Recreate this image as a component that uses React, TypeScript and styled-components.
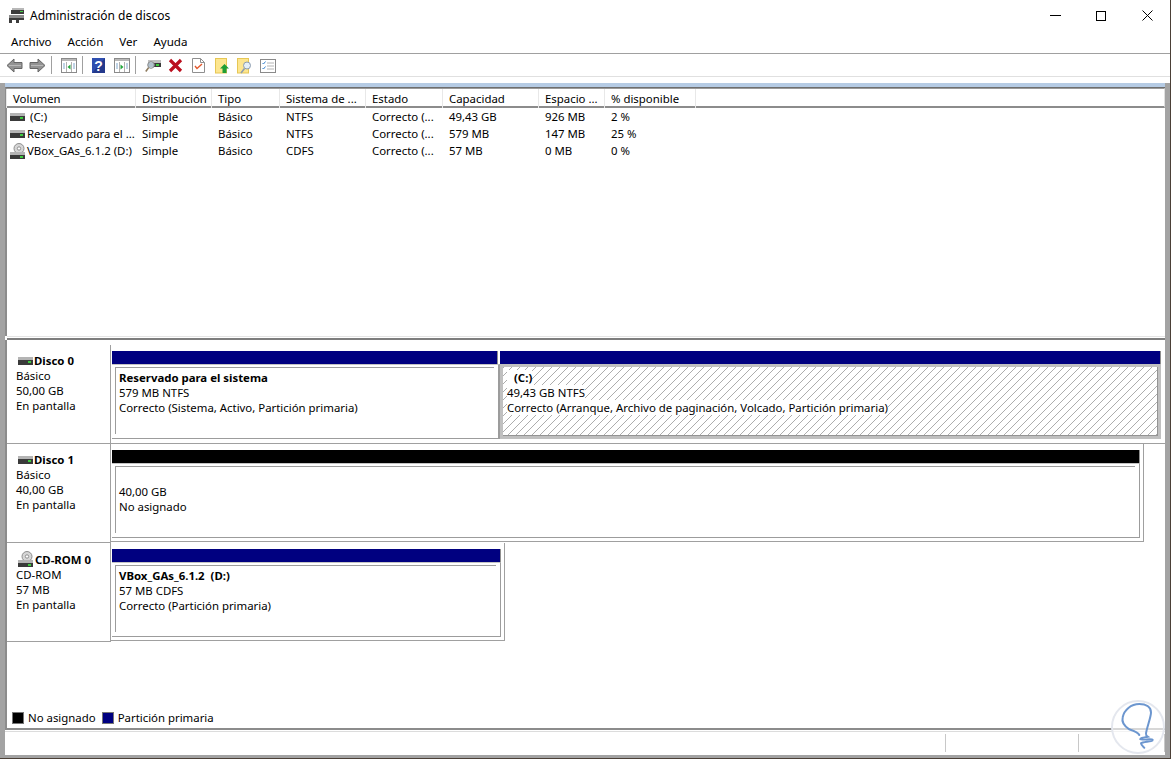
import React from 'react';
import styled, { createGlobalStyle, css } from 'styled-components';

const GlobalStyle = createGlobalStyle`
  html, body { margin: 0; padding: 0; height: 100%; overflow: hidden; background: #4b4037; }
  body { font-family: "Noto Sans", "Open Sans", sans-serif; font-size: 11.4px; color: #000; }
`;

const LINE = '#a0a0a0';
const FRAME = '#a3a3a3';
const NAVY = '#000080';

const Window = styled.div`
  position: relative;
  width: 1170px;
  height: 758px;
  background: #fff;
  display: flex;
  flex-direction: column;
`;

const TitleBar = styled.div`
  height: 33px;
  display: flex;
  align-items: flex-start;
  padding-left: 9px;
`;

const TitleText = styled.span`
  font-size: 12px;
  line-height: 16px;
  margin: 8px 0 0 5px;
  flex: 1;
`;

const WinButton = styled.div`
  width: 46px;
  height: 31px;
  display: flex;
  align-items: center;
  justify-content: center;
`;

const MenuBar = styled.div`
  height: 20px;
  display: flex;
  gap: 16px;
  padding-left: 11px;
  border-bottom: 1px solid ${LINE};
  font-size: 11.6px;
  line-height: 18px;
`;

const Toolbar = styled.div`
  height: 22px;
  box-sizing: content-box;
  display: flex;
  align-items: center;
  padding-left: 3px;
  border-bottom: 1px solid #e0e0e0;
  margin-bottom: 6px;
`;

const ToolButton = styled.div`
  width: 23px;
  height: 22px;
  padding-top: 1px;
  box-sizing: border-box;
  display: flex;
  align-items: center;
  justify-content: center;
`;

const ToolSep = styled.div<{ $right: number }>`
  width: 1px;
  height: 18px;
  background: #a0a0a0;
  margin: 0 ${(p) => p.$right}px 0 2px;
`;

const Frame = styled.div`
  flex: 1;
  min-height: 0;
  display: flex;
  flex-direction: column;
  border-left: 5px solid ${FRAME};
  border-right: 5px solid ${FRAME};
  border-bottom: 3px solid ${FRAME};
`;

const Band = styled.div`
  height: 4px;
  flex: none;
  background: #b5cbe4;
`;

const ListPane = styled.div`
  height: 249px;
  flex: none;
  border-left: 2px solid #8c8c8c;
  border-top: 1px solid #6e6e6e;
  box-sizing: border-box;
`;

const columns = '129px 76px 68px 86px 77px 96px 66px 91px 1fr';

const HeaderRow = styled.div`
  display: grid;
  grid-template-columns: ${columns};
  height: 20px;
  box-sizing: border-box;
  border-top: 1px solid #9a9a9a;
  border-bottom: 2px solid #8c8c8c;
  border-right: 1px solid #e0e0e0;
`;

const HeaderCell = styled.div`
  padding-left: 6px;
  line-height: 19px;
  white-space: nowrap;
  border-right: 1px solid #9c9c9c;
  border-left: 1px solid #e8e8e8;
  margin-left: -1px;
  &:last-child { border-right: none; }
`;

const Row = styled.div`
  display: grid;
  grid-template-columns: ${columns};
  height: 17px;
  line-height: 17px;
  white-space: nowrap;
`;

const Cell = styled.div`
  padding-left: 6px;
`;

const NameCell = styled.div<{ $indent?: number; $cd?: boolean }>`
  display: flex;
  align-items: center;
  gap: ${(p) => (p.$cd ? 1 : 2)}px;
  padding-left: 3px;
  span { margin-left: ${(p) => p.$indent ?? 0}px; }
`;

const Splitter = styled.div`
  height: 4px;
  flex: none;
  box-sizing: border-box;
  border-top: 1px solid #e4e4e4;
  border-bottom: 2px solid #7e7e7e;
  margin-left: 2px;
`;

const GraphPane = styled.div`
  flex: 1;
  min-height: 0;
  display: flex;
  flex-direction: column;
  border-left: 2px solid #8c8c8c;
  border-bottom: 2px solid #8c8c8c;
`;

const DiskRow = styled.div<{ $first?: boolean }>`
  display: flex;
  align-items: stretch;
  height: 99px;
  flex: none;
  ${(p) => p.$first && css`
    margin-top: 5px;
    border-bottom: 1px solid ${LINE};
    box-sizing: border-box;
    & > div:first-child { border-bottom: none; }
  `}
`;

const DiskLabel = styled.div`
  width: 104px;
  flex: none;
  box-sizing: border-box;
  padding: 8px 0 0 9px;
  border-right: 1px solid ${LINE};
  border-bottom: 1px solid ${LINE};
  line-height: 15px;
`;

const DiskName = styled.div`
  display: flex;
  align-items: center;
  gap: 1px;
  font-weight: 700;
  margin-left: 2px;
`;

const Partition = styled.div<{ $width: number; $outlined?: boolean; $flush?: boolean }>`
  width: ${(p) => p.$width}px;
  flex: none;
  box-sizing: border-box;
  height: 98px;
  display: flex;
  flex-direction: column;
  padding: 6px ${(p) => (p.$outlined ? 3 : 0)}px ${(p) => (p.$outlined ? 3 : 4)}px ${(p) => (p.$flush ? 0 : 1)}px;
  ${(p) => p.$outlined && css`
    border-right: 1px solid ${LINE};
    border-bottom: 1px solid ${LINE};
  `}
`;

const Bar = styled.div<{ $color: string; $inset?: number }>`
  height: 13px;
  flex: none;
  background: ${(p) => p.$color};
  margin-right: ${(p) => p.$inset ?? 1}px;
  box-shadow: 1px 0 0 #8f8f8f;
`;

const Box = styled.div<{ $thick?: boolean }>`
  flex: 1;
  min-height: 0;
  display: flex;
  border-top: 1px solid #c4c4c4;
  border-right: ${(p) => (p.$thick ? 2 : 1)}px solid #9c9c9c;
  border-bottom: 1px solid #9c9c9c;
`;

const BoxInner = styled.div`
  flex: 1;
  margin: 2px 4px 4px 3px;
  padding: 2px 0 0 3px;
  border-top: 1px solid #9c9c9c;
  border-left: 1px solid #9c9c9c;
  line-height: 15px;
  white-space: nowrap;
`;

const Selected = styled.div`
  flex: 1;
  min-height: 0;
  display: flex;
  padding: 3px;
  background: #c0c0c0;
`;

const Hatch = styled.div`
  flex: 1;
  box-sizing: border-box;
  padding: 3px 0 0 4px;
  border-right: 1px solid #949494;
  border-bottom: 1px solid #949494;
  line-height: 15px;
  white-space: nowrap;
  display: flex;
  flex-direction: column;
  align-items: flex-start;
  background: repeating-linear-gradient(135deg, #adadad 0 1px, #fff 1px 5.66px);
`;

const HatchText = styled.span<{ $bold?: boolean }>`
  background: #fff;
  font-weight: ${(p) => (p.$bold ? 700 : 400)};
  ${(p) => p.$bold && 'padding-left: 7px;'}
`;

const Strong = styled.div`
  font-weight: 700;
`;

const Blank = styled.div`
  height: 15px;
`;

const Legend = styled.div`
  margin-top: auto;
  display: flex;
  align-items: center;
  gap: 6px;
  padding: 0 0 3px 5px;
  line-height: 15px;
`;

const LegendItem = styled.div`
  display: flex;
  align-items: center;
  gap: 4px;
`;

const Swatch = styled.div<{ $color: string }>`
  width: 10px;
  height: 10px;
  border: 1px solid #777;
  background: ${(p) => p.$color};
`;

const StatusBar = styled.div`
  height: 24px;
  flex: none;
  box-sizing: border-box;
  display: flex;
  margin-top: 1px;
  padding: 2px 0 3px;
  border-top: 1px solid #dcdcdc;
`;

const StatusCell = styled.div<{ $width?: number }>`
  ${(p) => (p.$width ? `width: ${p.$width}px; flex: none;` : 'flex: 1;')}
  box-sizing: border-box;
  border-right: 1px solid #c8c8c8;
`;

const Watermark = styled.svg`
  position: absolute;
  right: 5px;
  bottom: 3px;
`;

const DriveIcon = () => (
  <svg width="15" height="8" viewBox="0 0 15 8">
    <rect x="0" y="0" width="15" height="3" fill="#b4b4b4" />
    <rect x="0" y="3" width="15" height="5" fill="#3a3a3a" />
    <rect x="10" y="4" width="3" height="2" fill="#3ecb3e" />
  </svg>
);

const CdIcon = () => (
  <svg width="16" height="16" viewBox="0 0 16 16">
    <circle cx="9" cy="5.5" r="5" fill="#d6d6d6" stroke="#8e8e8e" />
    <circle cx="9" cy="5.5" r="1.7" fill="#fff" stroke="#8e8e8e" />
    <rect x="0" y="9" width="15" height="3" fill="#b4b4b4" />
    <rect x="0" y="12" width="15" height="4" fill="#3a3a3a" />
    <rect x="10" y="13" width="3" height="2" fill="#3ecb3e" />
  </svg>
);

const AppIcon = () => (
  <svg width="16" height="16" viewBox="0 0 16 16" style={{ marginTop: 8 }}>
    <rect x="3" y="0" width="12" height="2" fill="#b8b8b8" />
    <rect x="2" y="2" width="13" height="4" fill="#3c3c3c" />
    <rect x="11" y="3" width="3" height="1" fill="#44d044" />
    <rect x="0" y="7" width="15" height="3" fill="#8c8c8c" />
    <rect x="0" y="10" width="3" height="5" fill="#3c3c3c" />
    <rect x="7" y="10" width="3" height="5" fill="#3c3c3c" />
    <rect x="3" y="10" width="4" height="2" fill="#3c3c3c" />
    <rect x="10" y="10" width="5" height="2" fill="#3c3c3c" />
  </svg>
);

const ArrowIcon = ({ flip }: { flip?: boolean }) => (
  <svg width="17" height="15" viewBox="0 0 17 15" style={flip ? { transform: 'scaleX(-1)' } : undefined}>
    <path d="M1 7.5 8 1v3.5h8v6H8V14z" fill="#939393" stroke="#666" />
    <path d="M3 7.5h12" stroke="#b9b9b9" />
  </svg>
);

const PaneIcon = ({ right }: { right?: boolean }) => (
  <svg width="16" height="15" viewBox="0 0 16 15">
    <rect x="0.5" y="0.5" width="15" height="14" fill="#fff" stroke="#8a8a8a" />
    <rect x="1" y="1" width="14" height="2" fill="#b8b8b8" />
    <path d="M5.5 4v10M10.5 4v10" stroke="#b0b0b0" />
    {right
      ? <path d="M6.5 6.5v5l3-2.5z" fill="#22a83c" />
      : <path d="M9.5 6.5v5l-3-2.5z" fill="#22a83c" />}
    <path d="M2 6h2M2 8h2M2 10h2M12 6h2M12 8h2M12 10h2" stroke="#7fa6cc" />
  </svg>
);

const HelpIcon = () => (
  <svg width="13" height="15" viewBox="0 0 13 15">
    <rect width="13" height="15" fill="#2f4fb0" />
    <path d="M0 15 13 0v15z" fill="#24398c" />
    <text x="6.5" y="12.5" textAnchor="middle" fontFamily="Liberation Sans" fontWeight="700" fontSize="14" fill="#fff">?</text>
  </svg>
);

const DiskSearchIcon = () => (
  <svg width="16" height="15" viewBox="0 0 16 15">
    <rect x="3" y="2" width="13" height="3" fill="#c0c0c0" />
    <rect x="3" y="5" width="13" height="4" fill="#3a3a3a" />
    <rect x="11" y="6" width="3" height="2" fill="#3ecb3e" />
    <circle cx="6" cy="7" r="3.3" fill="#cfe3f2" fillOpacity="0.8" stroke="#8a8a8a" />
    <path d="M3.6 9.6 0.8 13.5" stroke="#8d7a5c" strokeWidth="1.6" />
  </svg>
);

const DeleteIcon = () => (
  <svg width="15" height="15" viewBox="0 0 15 15">
    <path d="M2 2 13 13M13 2 2 13" stroke="#bb0f1e" strokeWidth="3.2" />
  </svg>
);

const DocIcon = () => (
  <svg width="13" height="15" viewBox="0 0 13 15">
    <path d="M.5.5h8l4 4v10H.5z" fill="#fff" stroke="#8f8f8f" />
    <path d="M8.5.5v4h4" fill="none" stroke="#8f8f8f" />
    <path d="M3 8l2 2.5L10 6" fill="none" stroke="#e2582c" strokeWidth="1.4" />
  </svg>
);

const FolderUpIcon = () => (
  <svg width="14" height="16" viewBox="0 0 14 16">
    <rect x="0.5" y="0.5" width="11" height="14.5" fill="#fde68f" stroke="#e6c755" />
    <path d="M9.5 6 14 10.5h-2.5V15h-4v-4.500H5z" fill="#1f9e35" />
  </svg>
);

const FolderSearchIcon = () => (
  <svg width="15" height="16" viewBox="0 0 15 16">
    <rect x="0.5" y="0.5" width="11" height="14.500" fill="#fde68f" stroke="#e6c755" />
    <circle cx="10" cy="7.500" r="3.500" fill="#e4eff8" stroke="#8c9cae" />
    <path d="M7.500 10.500 4 15" stroke="#8c9cae" strokeWidth="1.600" />
  </svg>
);

const ChecklistIcon = () => (
  <svg width="16" height="14" viewBox="0 0 16 14">
    <rect x="0.5" y="0.5" width="15" height="13" fill="#fff" stroke="#8a8a8a" />
    <path d="M2.500 4l1 1 2-2.500M2.500 9l1 1 2-2.500" fill="none" stroke="#3c86d0" />
    <path d="M7 4h7M7 7h7M7 10h7" stroke="#b4b4b4" />
  </svg>
);

const rows = [
  { name: '(C:)', indent: 3, dist: 'Simple', type: 'Básico', fs: 'NTFS', state: 'Correcto (...', cap: '49,43 GB', free: '926 MB', pct: '2 %' },
  { name: 'Reservado para el ...', dist: 'Simple', type: 'Básico', fs: 'NTFS', state: 'Correcto (...', cap: '579 MB', free: '147 MB', pct: '25 %' },
  { name: 'VBox_GAs_6.1.2 (D:)', cd: true, dist: 'Simple', type: 'Básico', fs: 'CDFS', state: 'Correcto (...', cap: '57 MB', free: '0 MB', pct: '0 %' },
];

const headers = ['Volumen', 'Distribución', 'Tipo', 'Sistema de ...', 'Estado', 'Capacidad', 'Espacio ...', '% disponible', ''];

export default function App() {
  return (
    <>
      <GlobalStyle />
      <Window>
        <TitleBar>
          <AppIcon />
          <TitleText>Administración de discos</TitleText>
          <WinButton>
            <svg width="11" height="11" viewBox="0 0 11 11"><path d="M0 5.500h11" stroke="#000" /></svg>
          </WinButton>
          <WinButton>
            <svg width="10" height="10" viewBox="0 0 10 10"><rect x="0.500" y="0.500" width="9" height="9" fill="none" stroke="#000" /></svg>
          </WinButton>
          <WinButton>
            <svg width="11" height="11" viewBox="0 0 11 11"><path d="M.5.500l10 10M10.500.500l-10 10" stroke="#000" /></svg>
          </WinButton>
        </TitleBar>
        <MenuBar>
          <span>Archivo</span>
          <span>Acción</span>
          <span>Ver</span>
          <span>Ayuda</span>
        </MenuBar>
        <Toolbar>
          <ToolButton><ArrowIcon /></ToolButton>
          <ToolButton><ArrowIcon flip /></ToolButton>
          <ToolSep $right={5} />
          <ToolButton><PaneIcon /></ToolButton>
          <ToolSep $right={4} />
          <ToolButton><HelpIcon /></ToolButton>
          <ToolButton><PaneIcon right /></ToolButton>
          <ToolSep $right={5} />
          <ToolButton><DiskSearchIcon /></ToolButton>
          <ToolButton><DeleteIcon /></ToolButton>
          <ToolButton><DocIcon /></ToolButton>
          <ToolButton><FolderUpIcon /></ToolButton>
          <ToolButton><FolderSearchIcon /></ToolButton>
          <ToolButton><ChecklistIcon /></ToolButton>
        </Toolbar>
        <Frame>
          <Band />
          <ListPane>
            <HeaderRow>
              {headers.map((h, i) => <HeaderCell key={i}>{h}</HeaderCell>)}
            </HeaderRow>
            {rows.map((r) => (
              <Row key={r.name}>
                <NameCell $indent={r.indent} $cd={r.cd}>
                  {r.cd ? <CdIcon /> : <DriveIcon />}
                  <span>{r.name}</span>
                </NameCell>
                <Cell>{r.dist}</Cell>
                <Cell>{r.type}</Cell>
                <Cell>{r.fs}</Cell>
                <Cell>{r.state}</Cell>
                <Cell>{r.cap}</Cell>
                <Cell>{r.free}</Cell>
                <Cell>{r.pct}</Cell>
              </Row>
            ))}
          </ListPane>
          <Splitter />
          <GraphPane>
            <DiskRow $first>
              <DiskLabel>
                <DiskName><DriveIcon />Disco 0</DiskName>
                <div>Básico</div>
                <div>50,00 GB</div>
                <div>En pantalla</div>
              </DiskLabel>
              <Partition $width={389}>
                <Bar $color={NAVY} $inset={3} />
                <Box $thick>
                  <BoxInner>
                    <Strong>Reservado para el sistema</Strong>
                    <div>579 MB NTFS</div>
                    <div>Correcto (Sistema, Activo, Partición primaria)</div>
                  </BoxInner>
                </Box>
              </Partition>
              <Partition $width={661} $flush>
                <Bar $color={NAVY} />
                <Selected>
                  <Hatch>
                    <HatchText $bold>(C:)</HatchText>
                    <HatchText>49,43 GB NTFS</HatchText>
                    <HatchText>Correcto (Arranque, Archivo de paginación, Volcado, Partición primaria)</HatchText>
                  </Hatch>
                </Selected>
              </Partition>
            </DiskRow>
            <DiskRow>
              <DiskLabel>
                <DiskName><DriveIcon />Disco 1</DiskName>
                <div>Básico</div>
                <div>40,00 GB</div>
                <div>En pantalla</div>
              </DiskLabel>
              <Partition $width={1033} $outlined>
                <Bar $color="#000" />
                <Box>
                  <BoxInner>
                    <Blank />
                    <div>40,00 GB</div>
                    <div>No asignado</div>
                  </BoxInner>
                </Box>
              </Partition>
            </DiskRow>
            <DiskRow>
              <DiskLabel>
                <DiskName><CdIcon />CD-ROM 0</DiskName>
                <div>CD-ROM</div>
                <div>57 MB</div>
                <div>En pantalla</div>
              </DiskLabel>
              <Partition $width={394} $outlined>
                <Bar $color={NAVY} />
                <Box>
                  <BoxInner>
                    <Strong>VBox_GAs_6.1.2&nbsp;&nbsp;(D:)</Strong>
                    <div>57 MB CDFS</div>
                    <div>Correcto (Partición primaria)</div>
                  </BoxInner>
                </Box>
              </Partition>
            </DiskRow>
            <Legend>
              <LegendItem><Swatch $color="#000" />No asignado</LegendItem>
              <LegendItem><Swatch $color={NAVY} />Partición primaria</LegendItem>
            </Legend>
          </GraphPane>
          <StatusBar>
            <StatusCell />
            <StatusCell $width={133} />
            <StatusCell $width={86} />
          </StatusBar>
        </Frame>
        <Watermark width="54" height="56" viewBox="0 0 54 56">
          <circle cx="27" cy="28" r="26" fill="#fff" fillOpacity="0.65" stroke="#e4e7ee" strokeWidth="2" />
          <path
            d="M18.300 30.300C13 27 10.500 23 11.700 18.300C13 11 20 5 28.300 5C35 5 40 8 40 13.500C40 18 36 28 35 34.300C34.800 36.500 35.500 37 36.700 37.700C33 38.500 29 39 29.300 40.300C31 41.500 41 39 41.700 40.800C42 43 32 42.500 30 44.300C30 46 32 47.500 33.300 48.700M18.300 30.300C22 31.500 27 33 28.300 36"
            fill="none"
            stroke="#6c96cf"
            strokeWidth="2"
            strokeLinecap="round"
          />
        </Watermark>
      </Window>
    </>
  );
}
